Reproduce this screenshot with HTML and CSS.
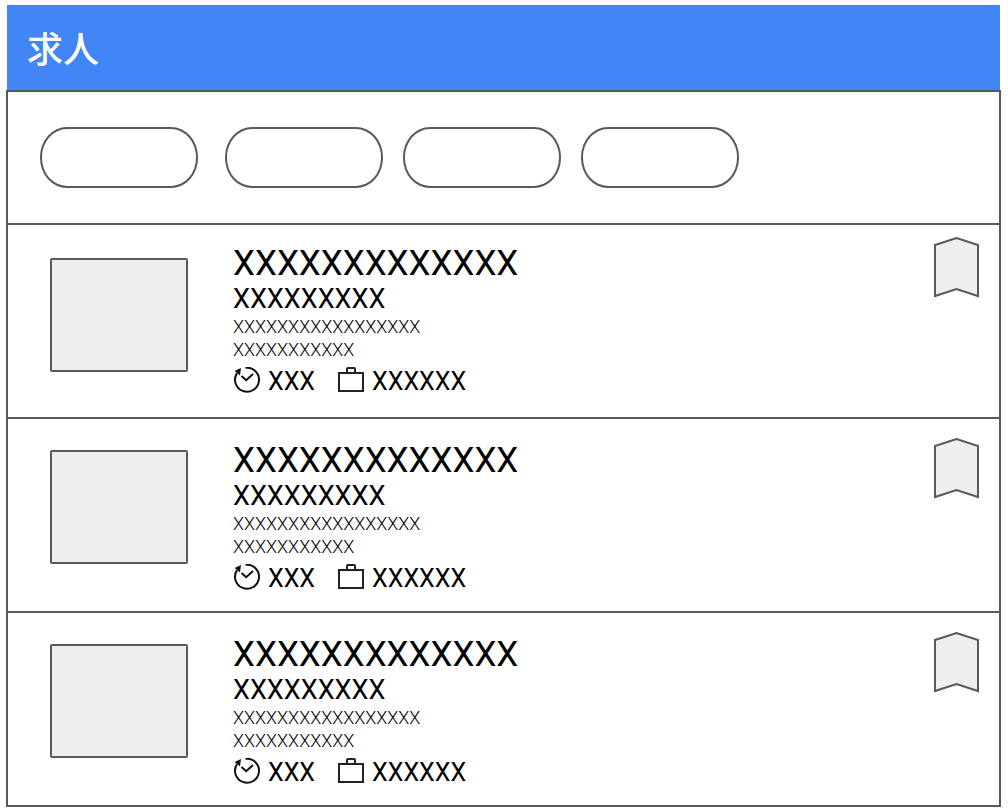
FILE: index.html
```html
<!DOCTYPE html>
<html lang="ja">
  <head>
    <meta charset="UTF-8" />
    <meta name="viewport" content="width=device-width, initial-scale=1.0" />
    <title>求人</title>
    <link rel="stylesheet" href="styles.css">
  </head>
  <body>
    <header class="header">
      <h1 class="header-title">求人</h1>
    </header>

    <main class="content">
      <div class="filters">
        <button type="button" class="filter-btn main-filter" aria-label="Filter 1"></button>
        <button type="button" class="filter-btn" aria-label="Filter 2"></button>
        <button type="button" class="filter-btn" aria-label="Filter 3"></button>
        <button type="button" class="filter-btn" aria-label="Filter 4"></button>
      </div>

      <div class="job-list">
        <article class="job">
          <div class="job-image"></div>
          <div class="job-info">
            <h2 class="job-title">XXXXXXXXXXXXX</h2>
            <p class="job-company">XXXXXXXXX</p>
            <p class="job-text">XXXXXXXXXXXXXXXXX</p>
            <p class="job-text">XXXXXXXXXXX</p>
            <div class="job-meta">
              <span class="meta-item">
                <svg class="icon" viewBox="0 0 28 30" aria-hidden="true">
                  <path d="M12.5 0.8A12 12 0 1 1 4.2 5.8" fill="none" stroke="#111" stroke-width="2" />
                  <path d="M1.5 4L8 1L7 8.500L4.500 6Z" fill="#111" />
                  <path d="M8.5 9L13.2 13.2L20 7" fill="none" stroke="#111" stroke-width="2" />
                </svg>
                XXX
              </span>
              <span class="meta-item">
                <svg class="icon" viewBox="0 0 28 30" aria-hidden="true">
                  <rect x="2" y="6" width="24" height="18" fill="none" stroke="#222" stroke-width="2" />
                  <path d="M10 6V2Q10 1 11 1H17Q18 1 18 2V6" fill="none" stroke="#222" stroke-width="2" />
                </svg>
                XXXXXX
              </span>
            </div>
          </div>
          <button type="button" class="bookmark-btn" aria-label="Bookmark">
            <svg class="bookmark" viewBox="0 0 46 62" aria-hidden="true">
              <path d="M2 8L23.5 1L45 8V59L23.5 52L2 59Z" fill="#eee" stroke="#595959" stroke-width="2" />
            </svg>
          </button>
        </article>

        <article class="job">
          <div class="job-image"></div>
          <div class="job-info">
            <h2 class="job-title">XXXXXXXXXXXXX</h2>
            <p class="job-company">XXXXXXXXX</p>
            <p class="job-text">XXXXXXXXXXXXXXXXX</p>
            <p class="job-text">XXXXXXXXXXX</p>
            <div class="job-meta">
              <span class="meta-item">
                <svg class="icon" viewBox="0 0 28 30" aria-hidden="true">
                  <path d="M12.5 0.8A12 12 0 1 1 4.2 5.8" fill="none" stroke="#111" stroke-width="2" />
                  <path d="M1.5 4L8 1L7 8.500L4.500 6Z" fill="#111" />
                  <path d="M8.5 9L13.2 13.2L20 7" fill="none" stroke="#111" stroke-width="2" />
                </svg>
                XXX
              </span>
              <span class="meta-item">
                <svg class="icon" viewBox="0 0 28 30" aria-hidden="true">
                  <rect x="2" y="6" width="24" height="18" fill="none" stroke="#222" stroke-width="2" />
                  <path d="M10 6V2Q10 1 11 1H17Q18 1 18 2V6" fill="none" stroke="#222" stroke-width="2" />
                </svg>
                XXXXXX
              </span>
            </div>
          </div>
          <button type="button" class="bookmark-btn" aria-label="Bookmark">
            <svg class="bookmark" viewBox="0 0 46 62" aria-hidden="true">
              <path d="M2 8L23.5 1L45 8V59L23.5 52L2 59Z" fill="#eee" stroke="#595959" stroke-width="2" />
            </svg>
          </button>
        </article>

        <article class="job">
          <div class="job-image"></div>
          <div class="job-info">
            <h2 class="job-title">XXXXXXXXXXXXX</h2>
            <p class="job-company">XXXXXXXXX</p>
            <p class="job-text">XXXXXXXXXXXXXXXXX</p>
            <p class="job-text">XXXXXXXXXXX</p>
            <div class="job-meta">
              <span class="meta-item">
                <svg class="icon" viewBox="0 0 28 30" aria-hidden="true">
                  <path d="M12.5 0.8A12 12 0 1 1 4.2 5.8" fill="none" stroke="#111" stroke-width="2" />
                  <path d="M1.5 4L8 1L7 8.500L4.500 6Z" fill="#111" />
                  <path d="M8.5 9L13.2 13.2L20 7" fill="none" stroke="#111" stroke-width="2" />
                </svg>
                XXX
              </span>
              <span class="meta-item">
                <svg class="icon" viewBox="0 0 28 30" aria-hidden="true">
                  <rect x="2" y="6" width="24" height="18" fill="none" stroke="#222" stroke-width="2" />
                  <path d="M10 6V2Q10 1 11 1H17Q18 1 18 2V6" fill="none" stroke="#222" stroke-width="2" />
                </svg>
                XXXXXX
              </span>
            </div>
          </div>
          <button type="button" class="bookmark-btn" aria-label="Bookmark">
            <svg class="bookmark" viewBox="0 0 46 62" aria-hidden="true">
              <path d="M2 8L23.5 1L45 8V59L23.5 52L2 59Z" fill="#eee" stroke="#595959" stroke-width="2" />
            </svg>
          </button>
        </article>
      </div>
    </main>
  </body>
</html>
```
FILE: styles.css
```css
* {
  margin: 0;
  padding: 0;
  box-sizing: border-box;
}

body {
  font-family: Roboto, "Noto Sans CJK JP", sans-serif;
  background-color: #fff;
  color: #000;
  padding: 5px 7px 4px 6px;
}

.header {
  display: flex;
  align-items: center;
  margin: 0 1px;
  padding: 14px 20px 15px;
  background-color: #4285f4;
}

.header-title {
  color: #fff;
  font-family: "Noto Sans CJK JP", sans-serif;
  font-size: 36px;
  font-weight: 500;
  line-height: 56px;
}

.content {
  border: 2px solid #595959;
}

.filters {
  display: flex;
  gap: 20px;
  padding: 35px 32px;
  border-bottom: 2px solid #595959;
}

.filter-btn {
  width: 158px;
  height: 61px;
  border: 2px solid #595959;
  border-radius: 27px / 30px;
  background-color: #fff;
  cursor: pointer;
}

.main-filter {
  margin-right: 7px;
}

.job {
  display: flex;
  align-items: flex-start;
  min-height: 194px;
  padding: 19px 20px 0 42px;
  border-bottom: 2px solid #595959;
}

.job:last-child {
  min-height: 192px;
  border-bottom: none;
}

.job-image {
  width: 138px;
  height: 114px;
  margin-top: 12px;
  border: 2px solid #595959;
  border-radius: 2px;
  background-color: #eee;
}

.job-info {
  flex: 1;
  margin-top: 3px;
  margin-left: 45px;
}

.job-title {
  font-size: 35px;
  font-weight: 400;
  line-height: 40px;
}

.job-company {
  font-size: 27px;
  line-height: 31px;
}

.job-text {
  font-size: 18px;
  font-weight: 300;
  line-height: 23px;
}

.job-meta {
  display: flex;
  gap: 22px;
}

.meta-item {
  display: flex;
  align-items: center;
  gap: 7px;
  font-size: 25px;
  line-height: 42px;
}

.icon {
  width: 28px;
  height: 30px;
}

.bookmark-btn {
  border: none;
  background: none;
  cursor: pointer;
}

.bookmark {
  display: block;
  width: 46px;
  height: 62px;
}

/* the top job sits closer to the filters */
.job:first-child {
  padding-top: 12px;
}

.job:first-child .job-image {
  margin-top: 21px;
}

.job:first-child .job-info {
  margin-top: 7px;
}
```
